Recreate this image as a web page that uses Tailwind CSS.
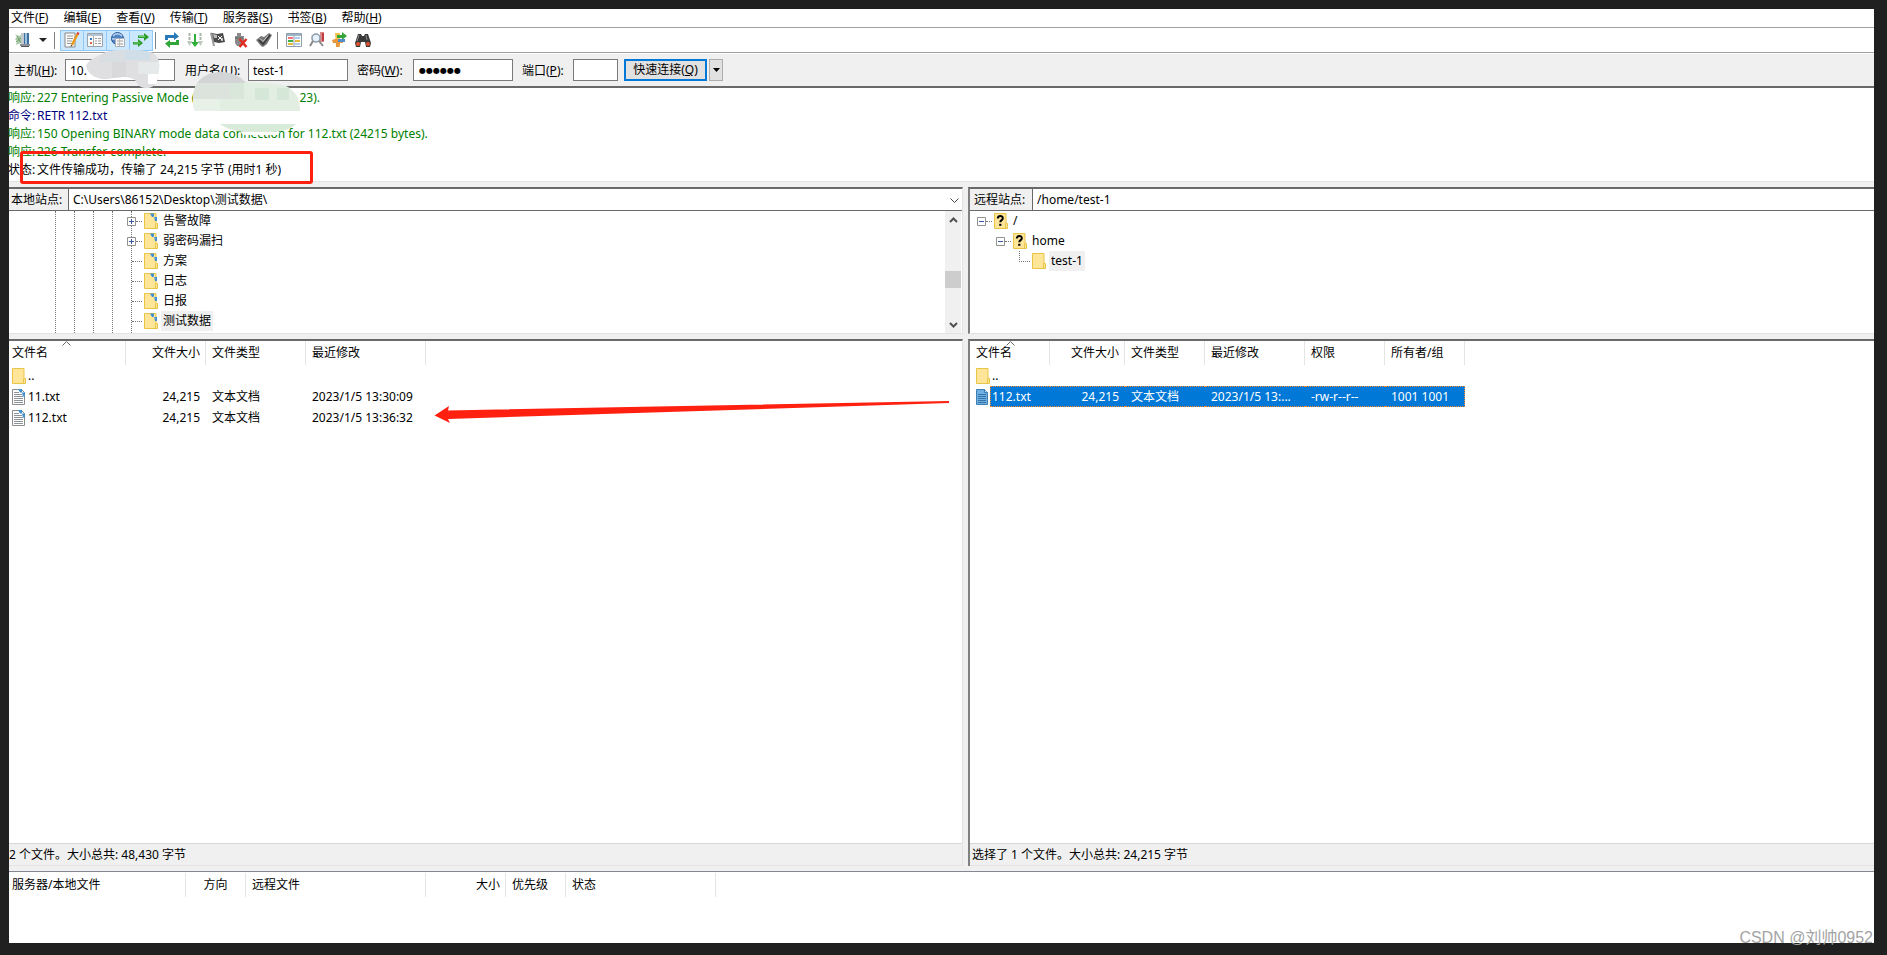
<!DOCTYPE html>
<html lang="zh-CN">
<head>
<meta charset="utf-8">
<title>FileZilla</title>
<script src="https://cdn.jsdelivr.net/npm/@tailwindcss/browser@4"></script>
</head>
<body class="bg-[#202020] text-black text-[12px] leading-[18px] font-['Noto_Sans','Noto_Sans_CJK_SC',sans-serif]">
<svg class="hidden">
  <defs>
    <symbol id="folder" viewBox="0 0 14 16"><path d="M.5.5h11.500v10h1.500v5H.5z" fill="#ffe597" stroke="#e8c547"/><path d="M11.500 10.500v5" stroke="#e8c547"/></symbol>
    <symbol id="folder-sync" viewBox="0 0 14 16"><use href="#folder"/><path d="M6 .5h4v3.500H8zM10 4h3v4h-2z" fill="#3e8fd0"/><path d="M9 3l3 3" stroke="#6fb0e0" stroke-width="1"/></symbol>
    <symbol id="folder-q" viewBox="0 0 14 16"><use href="#folder"/><path d="M3.800 5.500c0-3.300 5-3.300 5-.3 0 2-2.500 1.800-2.500 4" fill="none" stroke="#000" stroke-width="2"/><path d="M5.200 10.800h2.200v2H5.200z"/></symbol>
    <symbol id="txt" viewBox="0 0 14 16"><path d="M.5.5h9l3 3v12H.5z" fill="#fff" stroke="#8c8c8c"/><path d="M2 3.500h5M2 5.500h8M2 7.500h9M2 9.500h9M2 11.500h9M2 13.500h9" stroke="#8c9298"/><path d="M6 0h4v3.500H8zM10 3.500h3v4h-2z" fill="#3e8fd0"/></symbol>
    <symbol id="txt-sel" viewBox="0 0 14 16"><path d="M.5.5h8l3 3v12H.5z" fill="#6fb0e2" stroke="#3d7fb5"/><path d="M8.500.5v3h3" fill="#b6dcf6" stroke="#3d7fb5"/><path d="M2 5.500h8M2 7.500h8M2 9.500h8M2 11.500h8M2 13.500h8" stroke="#3472a8"/></symbol>
    <symbol id="plus" viewBox="0 0 9 9"><path d="M.5.5h8v8h-8z" fill="#fff" stroke="#919191"/><path d="M2 4.500h5M4.500 2v5" stroke="#3b58a0"/></symbol>
    <symbol id="minus" viewBox="0 0 9 9"><path d="M.5.5h8v8h-8z" fill="#fff" stroke="#919191"/><path d="M2 4.500h5" stroke="#3b58a0"/></symbol>
  </defs>
</svg>

<div class="relative flex h-screen flex-col pt-[9px] pr-[13px] pb-3 pl-[9px]">
 <div class="flex min-h-0 flex-1 flex-col bg-white">

  <nav class="flex h-[19px] shrink-0 gap-[15px] border-b border-[#a0a0a0] pl-[2px] leading-[16px]">
    <button>文件(<u>F</u>)</button><button>编辑(<u>E</u>)</button><button>查看(<u>V</u>)</button><button>传输(<u>T</u>)</button><button>服务器(<u>S</u>)</button><button>书签(<u>B</u>)</button><button>帮助(<u>H</u>)</button>
  </nav>

  <div class="flex h-[25px] shrink-0 items-center border-b border-[#a0a0a0] pl-[5px]">
    <button aria-label="站点管理器" class="flex w-[18px] justify-center"><svg width="16" height="16"><path d="M0 2l4 2 2-1v8l-5 2 1-4-2-2 2-2z" fill="#a9cba6"/><path d="M2 4l4 7M1 10l5-4" stroke="#6fa070"/><path d="M6 1h3v11H6z" fill="#c3c9cf"/><path d="M9 1h5v11H9z" fill="#3e6f9f"/><path d="M10 1h2v11h-2z" fill="#9fc3e0"/><path d="M5 12h10v2H5z" fill="#8b9197"/><path d="M6 14h8v1H6z" fill="#555"/></svg></button>
    <button aria-label="站点列表" class="flex w-[22px] justify-center"><svg width="8" height="4"><path d="M0 0h8L4 4z" fill="#222"/></svg></button>
    <span class="mr-[5px] h-[17px] w-px bg-[#808080]"></span>
    <div class="flex h-[21px] divide-x divide-[#91c9f7] border border-[#91c9f7] bg-[#cce8ff]">
      <button aria-label="消息日志" class="flex w-[23px] items-center justify-center"><svg width="16" height="16"><path d="M1 1h10v14H1z" fill="#fafafa" stroke="#8a8a8a"/><path d="M3 4h6M3 6.500h6M3 9h5M3 11.500h6" stroke="#999"/><path d="M13.500 2L8 13" stroke="#e89a1c" stroke-width="2.500"/><path d="M13 1l2 1" stroke="#d33" stroke-width="2"/><path d="M7 13l-.5 2 2-1.500z" fill="#333"/></svg></button>
      <button aria-label="本地目录树" class="flex w-[23px] items-center justify-center"><svg width="16" height="14"><path d="M.5.5h15v13H.5z" fill="#fcfcfc" stroke="#9aa3ad"/><path d="M1 1h14v2H1z" fill="#b4c3d3"/><path d="M6.500 3v10" stroke="#aaa"/><path d="M3 5h2v2H3z" fill="#337ac7"/><path d="M3 9h2v2H3z" fill="#d8653b"/><path d="M8 5.500h2M11 5.500h3M8 8h2M11 8h3M8 10.500h2M11 10.500h3" stroke="#999"/></svg></button>
      <button aria-label="远程目录树" class="flex w-[23px] items-center justify-center"><svg width="16" height="16"><circle cx="7.500" cy="6.500" r="6" fill="#4f83c4" stroke="#2a5693"/><path d="M3 4c2-3 7-3 9 0M2 7h9" stroke="#b7d3ef" fill="none" stroke-width="1.500"/><path d="M5.500 6.500h9v8h-9z" fill="#fafafa" stroke="#a7adb4"/><path d="M7 9h2M10 9h3M7 12h2M10 12h3" stroke="#999"/><path d="M9.500 7v7" stroke="#bbb"/></svg></button>
      <button aria-label="传输队列" class="flex w-[22px] items-center justify-center"><svg width="16" height="16"><path d="M5 3.500h6V1l5 4-5 4V6H5zM0 10h5V7l5 4-5 4v-2.500H0z" fill="#2b9b2b"/><path d="M6 4.500h6M1 11h6" stroke="#7bd06f"/></svg></button>
    </div>
    <span class="mr-[8px] ml-[2px] h-[17px] w-px bg-[#808080]"></span>
    <button aria-label="刷新" class="flex w-[23px]"><svg width="16" height="16"><path d="M1 8V3h9V0l5 4.500L10 8V6H4v2z" fill="#2779b8"/><path d="M15 8v5H6v3l-5-4.500L6 8v2h6V8z" fill="#2fa53a"/></svg></button>
    <button aria-label="处理队列" class="flex w-[23px]"><svg width="16" height="16"><path d="M2.500 1v9M13.500 1v9" stroke="#a9b5a9" stroke-width="2" stroke-dasharray="3 1"/><path d="M0 9h5l-2.500 5zM11 9h5l-2.500 5z" fill="#bdc8bd"/><path d="M7 2h2v8h3l-4 5-4-5h3z" fill="#2fae38"/></svg></button>
    <button aria-label="取消" class="flex w-[23px]"><svg width="16" height="16"><path d="M0 1l2-.5L5 14H3z" fill="#999"/><path d="M2 1l5 1 6-1 2 9-6 1-5-1z" fill="#4a4a4a"/><path d="M3 2l4 1v3H4zM11 6h2v3h-2z" fill="#bbb"/><path d="M8 4l4 4M12 4L8 8" stroke="#fff"/></svg></button>
    <button aria-label="断开" class="flex w-[23px]"><svg width="16" height="16"><path d="M2 4h2V1h4v3h3v7l-3 3H4l-2-3z" fill="#8b8b8b"/><path d="M2 6h8" stroke="#666"/><path d="M6.500 7l7 8M13.500 7l-7 8" stroke="#e22b22" stroke-width="2.500"/></svg></button>
    <button aria-label="重新连接" class="flex w-[21px]"><svg width="16" height="16"><path d="M0 8l5-4 3 1 5-4 3 2-5 9-4 3-2-1z" fill="#777"/><path d="M3 8l4 4 7-9" fill="none" stroke="#3f3f3f" stroke-width="2"/><path d="M4 6.500l3 3 5-6" fill="none" stroke="#ccc"/></svg></button>
    <span class="mr-[8px] h-[17px] w-px bg-[#808080]"></span>
    <button aria-label="过滤器" class="flex w-[23px]"><svg width="16" height="14"><path d="M.5.500h15v13H.5z" fill="#fff" stroke="#8c9cab"/><path d="M1 1h14v2H1z" fill="#9db5c9"/><path d="M2 5h5" stroke="#e44" stroke-width="1.500"/><path d="M2 8h5" stroke="#37b04a" stroke-width="2"/><path d="M2 11h5M9 8h5" stroke="#e8b93b" stroke-width="2"/><path d="M8 3v11" stroke="#8c9cab"/><path d="M9 5h5M9 11h5" stroke="#5b9bd5"/></svg></button>
    <button aria-label="目录比较" class="flex w-[23px]"><svg width="16" height="16"><path d="M2 2h6v9H2z" fill="#eee"/><path d="M11 0h4v10h-4z" fill="#d98a8a"/><path d="M13 1h2v8h-2z" fill="#c33b3b"/><circle cx="7" cy="6" r="4" fill="#e6f1fa" stroke="#8b9aab" stroke-width="1.500"/><path d="M4 9l-3 5M10 9l4 5" stroke="#8a8a8a" stroke-width="2"/></svg></button>
    <button aria-label="同步浏览" class="flex w-[23px]"><svg width="16" height="16"><path d="M3 1h5v14H4z" fill="#f3c34f"/><path d="M5 3h5V0l5 4-5 4V6H5z" fill="#35a53c"/><path d="M0 8l3-1h8v4H8l-1 4H4v-4H1z" fill="#e8973a"/><path d="M6 7h7v3H6z" fill="#4f8fce"/></svg></button>
    <button aria-label="搜索" class="flex w-[23px]"><svg width="16" height="16"><path d="M3 2h3l1 2h2l1-2h3l3 9-1 4h-4l-1-5H6l-1 5H1l-1-4z" fill="#3a3a3a"/><path d="M4 3l-2 6M11 3l1 5" stroke="#8b8b8b"/><circle cx="3" cy="12" r="2" fill="#e0502b"/><circle cx="13" cy="12" r="2" fill="#e0502b"/></svg></button>
  </div>

  <form class="mt-px flex h-[34px] shrink-0 items-center border-b-2 border-[#696969] bg-[#f0f0f0] pl-[5px]">
    <label for="host" class="w-[51px] pt-[2px] whitespace-nowrap">主机(<u>H</u>):</label>
    <input id="host" value="10." class="mr-[10px] h-[22px] w-[110px] border border-[#7a7a7a] bg-white px-[4px]">
    <label for="user" class="w-[63px] pt-[2px] whitespace-nowrap">用户名(<u>U</u>):</label>
    <input id="user" value="test-1" class="mr-[9px] h-[22px] w-[100px] border border-[#7a7a7a] bg-white px-[4px]">
    <label for="pass" class="w-[56px] pt-[2px] whitespace-nowrap">密码(<u>W</u>):</label>
    <input id="pass" value="●●●●●●" class="mr-[9px] h-[22px] w-[100px] border border-[#7a7a7a] bg-white px-[5px] font-['DejaVu_Sans'] text-[8px]">
    <label for="port" class="w-[51px] pt-[2px] whitespace-nowrap">端口(<u>P</u>):</label>
    <input id="port" class="mr-[6px] h-[22px] w-[45px] border border-[#7a7a7a] bg-white px-[4px]">
    <button type="button" class="mr-[2px] h-[22px] w-[83px] border-2 border-[#0078d7] bg-[#e1e1e1] whitespace-nowrap">快速连接(<u>Q</u>)</button>
    <button type="button" aria-label="历史" class="flex h-[22px] w-[14px] items-center justify-center border border-[#adadad] bg-[#e1e1e1]"><svg width="7" height="4"><path d="M0 0h7L3.500 4z"/></svg></button>
  </form>

  <section class="h-[94px] shrink-0 border-b border-[#e3e3e3] pt-px text-[#008000]">
    <p class="-ml-px flex"><span class="w-[29px]">响应:</span>227 Entering Passive Mode&nbsp;(<span class="w-[104px]"></span>23).</p>
    <p class="-ml-px flex text-[#000080]"><span class="w-[29px]">命令:</span>RETR 112.txt</p>
    <p class="-ml-px flex"><span class="w-[29px]">响应:</span>150 Opening BINARY mode data connection for 112.txt (24215 bytes).</p>
    <p class="-ml-px flex"><span class="w-[29px]">响应:</span>226 Transfer complete.</p>
    <p class="-ml-px flex text-black"><span class="w-[29px]">状态:</span>文件传输成功，传输了 24,215 字节 (用时1 秒)</p>
  </section>

  <main class="grid min-h-0 flex-1 grid-cols-[954fr_906fr] grid-rows-[147px_minmax(0,1fr)] gap-x-[5px] gap-y-[5px] bg-[#f0f0f0] pt-[5px]">
    <section class="flex min-h-0 flex-col border-t-2 border-r border-b border-t-[#696969] border-r-[#e3e3e3] border-b-[#e3e3e3] bg-white">
      <div class="flex h-[22px] shrink-0 border-b border-[#696969]">
        <label for="local" class="w-[60px] border-r border-[#696969] bg-[#f0f0f0] pl-[2px] leading-[21px] whitespace-nowrap">本地站点:</label>
        <div class="relative flex-1">
          <select id="local" class="h-full w-full appearance-none pl-[4px]"><option>C:\Users\86152\Desktop\测试数据\</option></select>
          <svg class="pointer-events-none absolute top-[9px] right-[3px]" width="9" height="6"><path d="M.5.500l4 4 4-4" fill="none" stroke="#444"/></svg>
        </div>
      </div>
      <div class="flex min-h-0 flex-1">
        <div class="flex w-[123px] shrink-0 gap-[18px] pl-[46px]">
          <span class="border-l border-dotted border-[#777]"></span><span class="border-l border-dotted border-[#777]"></span><span class="border-l border-dotted border-[#777]"></span><span class="border-l border-dotted border-[#777]"></span><span class="border-l border-dotted border-[#777]"></span>
        </div>
        <ul class="-ml-[5px] flex-1 leading-[20px]">
          <li class="flex h-[20px] items-center"><svg width="9" height="9"><use href="#plus"/></svg><i class="mr-[2px] w-[6px] border-t border-dotted border-[#777]"></i><svg width="14" height="16"><use href="#folder-sync"/></svg><span class="ml-[3px] px-[2px]">告警故障</span></li>
          <li class="flex h-[20px] items-center"><svg width="9" height="9"><use href="#plus"/></svg><i class="mr-[2px] w-[6px] border-t border-dotted border-[#777]"></i><svg width="14" height="16"><use href="#folder-sync"/></svg><span class="ml-[3px] px-[2px]">弱密码漏扫</span></li>
          <li class="flex h-[20px] items-center"><i class="mr-[2px] ml-[5px] w-[10px] border-t border-dotted border-[#777]"></i><svg width="14" height="16"><use href="#folder-sync"/></svg><span class="ml-[3px] px-[2px]">方案</span></li>
          <li class="flex h-[20px] items-center"><i class="mr-[2px] ml-[5px] w-[10px] border-t border-dotted border-[#777]"></i><svg width="14" height="16"><use href="#folder-sync"/></svg><span class="ml-[3px] px-[2px]">日志</span></li>
          <li class="flex h-[20px] items-center"><i class="mr-[2px] ml-[5px] w-[10px] border-t border-dotted border-[#777]"></i><svg width="14" height="16"><use href="#folder-sync"/></svg><span class="ml-[3px] px-[2px]">日报</span></li>
          <li class="flex h-[20px] items-center"><i class="mr-[2px] ml-[5px] w-[10px] border-t border-dotted border-[#777]"></i><svg width="14" height="16"><use href="#folder-sync"/></svg><span class="ml-[3px] bg-[#f0f0f0] px-[2px]">测试数据</span></li>
        </ul>
        <div class="mr-px flex w-[16px] flex-col items-center bg-[#f0f0f0] pt-[6px] pb-[5px]">
          <svg width="9" height="6"><path d="M1 5l3.500-3.500L8 5" fill="none" stroke="#505050" stroke-width="2"/></svg>
          <span class="mt-[48px] h-[17px] w-full bg-[#cdcdcd]"></span>
          <svg class="mt-auto" width="9" height="6"><path d="M1 1l3.500 3.500L8 1" fill="none" stroke="#505050" stroke-width="2"/></svg>
        </div>
      </div>
    </section>

    <section class="flex min-h-0 flex-col border-t-2 border-b border-l-2 border-t-[#696969] border-b-[#e3e3e3] border-l-[#808080] bg-white">
      <div class="flex h-[22px] shrink-0 border-b border-[#696969]">
        <label for="remote" class="w-[63px] border-r border-[#696969] bg-[#f0f0f0] pl-[4px] leading-[21px] whitespace-nowrap">远程站点:</label>
        <select id="remote" class="flex-1 appearance-none pl-[4px]"><option>/home/test-1</option></select>
      </div>
      <ul class="pl-[7px] leading-[20px]">
        <li class="flex h-[20px] items-center"><svg width="9" height="9"><use href="#minus"/></svg><i class="mr-[2px] w-[6px] border-t border-dotted border-[#777]"></i><svg width="14" height="16"><use href="#folder-q"/></svg><span class="ml-[3px] px-[2px]">/</span></li>
        <li class="flex h-[20px] items-center pl-[19px]"><svg width="9" height="9"><use href="#minus"/></svg><i class="mr-[2px] w-[6px] border-t border-dotted border-[#777]"></i><svg width="14" height="16"><use href="#folder-q"/></svg><span class="ml-[3px] px-[2px]">home</span></li>
        <li class="flex h-[20px] items-center pl-[42px]"><i class="mr-[2px] mb-[10px] h-[11px] w-[11px] border-b border-l border-dotted border-[#777]"></i><svg width="14" height="16"><use href="#folder"/></svg><span class="ml-[3px] bg-[#f0f0f0] px-[2px]">test-1</span></li>
      </ul>
    </section>

    <section class="flex min-h-0 flex-col border-t-2 border-r border-t-[#696969] border-r-[#e3e3e3] bg-white">
      <table class="w-[417px] table-fixed border-separate border-spacing-0">
        <colgroup><col class="w-[117px]"><col class="w-[80px]"><col class="w-[100px]"><col class="w-[120px]"></colgroup>
        <thead><tr class="h-[24px] text-left *:border-r *:border-[#e5e5e5] *:font-normal">
          <th class="relative pl-[3px]">文件名<svg class="absolute top-0 left-[53px]" width="9" height="5"><path d="M.5 4.500l4-4 4 4" fill="none" stroke="#666"/></svg></th><th class="pr-[5px] text-right">文件大小</th><th class="pl-[6px]">文件类型</th><th class="pl-[6px]">最近修改</th></tr></thead>
        <tbody class="*:h-[21px]">
          <tr><td class="pl-[3px]"><div class="flex items-center gap-[2px]"><svg width="14" height="16"><use href="#folder"/></svg>..</div></td><td></td><td></td><td></td></tr>
          <tr><td class="pl-[3px]"><div class="flex items-center gap-[2px]"><svg width="14" height="16"><use href="#txt"/></svg>11.txt</div></td><td class="pr-[6px] text-right">24,215</td><td class="pl-[6px]">文本文档</td><td class="pl-[6px] whitespace-nowrap">2023/1/5 13:30:09</td></tr>
          <tr><td class="pl-[3px]"><div class="flex items-center gap-[2px]"><svg width="14" height="16"><use href="#txt"/></svg>112.txt</div></td><td class="pr-[6px] text-right">24,215</td><td class="pl-[6px]">文本文档</td><td class="pl-[6px] whitespace-nowrap">2023/1/5 13:36:32</td></tr>
        </tbody>
      </table>
      <footer class="mt-auto h-[23px] border-t border-b border-t-[#d7d7d7] border-b-[#e3e3e3] bg-[#f0f0f0] leading-[22px]">2 个文件。大小总共: 48,430 字节</footer>
    </section>

    <section class="flex min-h-0 flex-col border-t-2 border-l-2 border-t-[#696969] border-l-[#808080] bg-white">
      <table class="w-[495px] table-fixed border-separate border-spacing-0">
        <colgroup><col class="w-[80px]"><col class="w-[75px]"><col class="w-[80px]"><col class="w-[100px]"><col class="w-[80px]"><col class="w-[80px]"></colgroup>
        <thead><tr class="h-[24px] text-left *:border-r *:border-[#e5e5e5] *:font-normal">
          <th class="relative pl-[6px]">文件名<svg class="absolute top-0 left-[36px]" width="9" height="5"><path d="M.5 4.500l4-4 4 4" fill="none" stroke="#666"/></svg></th><th class="pr-[5px] text-right">文件大小</th><th class="pl-[6px]">文件类型</th><th class="pl-[6px]">最近修改</th><th class="pl-[6px]">权限</th><th class="pl-[6px]">所有者/组</th></tr></thead>
        <tbody class="*:h-[21px]">
          <tr><td class="pl-[6px]"><div class="flex items-center gap-[2px]"><svg width="14" height="16"><use href="#folder"/></svg>..</div></td><td></td><td></td><td></td><td></td><td></td></tr>
          <tr class="leading-[19px] whitespace-nowrap text-white">
            <td class="p-0"><div class="flex h-[21px] items-center pl-[6px]"><svg width="14" height="16"><use href="#txt-sel"/></svg><span class="h-full flex-1 border-y border-l border-dotted border-[#ff8728] bg-[#0078d7] pl-px">112.txt</span></div></td>
            <td class="border-y border-dotted border-[#ff8728] bg-[#0078d7] pr-[6px] text-right">24,215</td><td class="border-y border-dotted border-[#ff8728] bg-[#0078d7] pl-[6px]">文本文档</td><td class="border-y border-dotted border-[#ff8728] bg-[#0078d7] pl-[6px]">2023/1/5 13:...</td><td class="border-y border-dotted border-[#ff8728] bg-[#0078d7] pl-[6px]">-rw-r--r--</td><td class="border-y border-r border-dotted border-[#ff8728] bg-[#0078d7] pl-[6px]">1001 1001</td></tr>
        </tbody>
      </table>
      <footer class="mt-auto h-[23px] border-t border-b border-t-[#d7d7d7] border-b-[#e3e3e3] bg-[#f0f0f0] pl-[2px] leading-[22px]">选择了 1 个文件。大小总共: 24,215 字节</footer>
    </section>
  </main>

  <section class="h-[77px] shrink-0 border-t-[5px] border-[#f0f0f0]">
    <div class="h-full border-t border-[#828790] pt-px">
    <table class="w-[707px] table-fixed border-separate border-spacing-0">
      <colgroup><col class="w-[177px]"><col class="w-[60px]"><col class="w-[180px]"><col class="w-[80px]"><col class="w-[60px]"><col class="w-[150px]"></colgroup>
      <thead><tr class="h-[24px] text-left *:border-r *:border-[#e5e5e5] *:font-normal"><th class="pl-[3px]">服务器/本地文件</th><th class="text-center">方向</th><th class="pl-[6px]">远程文件</th><th class="pr-[5px] text-right">大小</th><th class="pl-[6px]">优先级</th><th class="pl-[6px]">状态</th></tr></thead>
    </table>
    </div>
  </section>
 </div>

 <svg class="pointer-events-none absolute top-0 left-0" width="960" height="440" fill="none">
   <defs>
     <clipPath id="b1"><path d="M86 66c3-8 14-10 20-14 12-3 34-3 44 0 8 2 10 10 9 17l-2 12c-2 9-18 10-21 0-6-6-18-4-28-2-9 1-20-3-22-13z"/></clipPath>
     <clipPath id="b2"><path d="M195 111c-2-3-2-7-2-11 0-11 3-20 14-25 10-5 30-3 37 6 12 4 40-1 49 10 6 5 7 14 7 20z"/></clipPath>
   </defs>
   <g clip-path="url(#b1)"><path d="M80 48h90v44H80z" fill="#dfdfe1"/><path d="M100 48h25v14h-25z" fill="#d9dee2"/><path d="M125 48h25v12h-25z" fill="#d0dee8"/><path d="M112 62h14v16h-14z" fill="#d9d9dc"/><path d="M138 62h22v12h-22z" fill="#e6e9ea"/><path d="M148 74h14v10h-14z" fill="#fff"/></g>
   <g clip-path="url(#b2)"><path d="M185 70h120v44H185z" fill="#e3eee3"/><path d="M185 70h60v13h-60z" fill="#d3d4d5"/><path d="M190 83h40v16h-40z" fill="#dce3dd"/><path d="M255 88h14v12h-14zM277 88h12v12h-12z" fill="#d5e7d6"/><path d="M230 83h14v16h-14z" fill="#d8e7d9"/><path d="M190 99h30v14h-30z" fill="#e7f1e7"/></g>
   <path d="M220 124h76c-6 6-16 8-26 8h-26c-10-1-19-4-24-8z" fill="#d8ebd8"/>
   <path d="M240 132h40l-2 3h-34z" fill="#fff"/>
   <rect x="21.500" y="152.500" width="290" height="30" rx="1.500" stroke="#ff2010" stroke-width="3"/>
   <path d="M434.500 415.500L449 406l-1 4.500 501-9.500v2L448 419l2 4z" fill="#ff2010"/>
 </svg>
 <p class="absolute right-[14px] bottom-[7px] font-['Liberation_Sans','Noto_Sans_CJK_SC'] text-[16px] leading-[20px] text-[#a3a3a3]">CSDN @刘帅0952</p>
</div>
</body>
</html>
